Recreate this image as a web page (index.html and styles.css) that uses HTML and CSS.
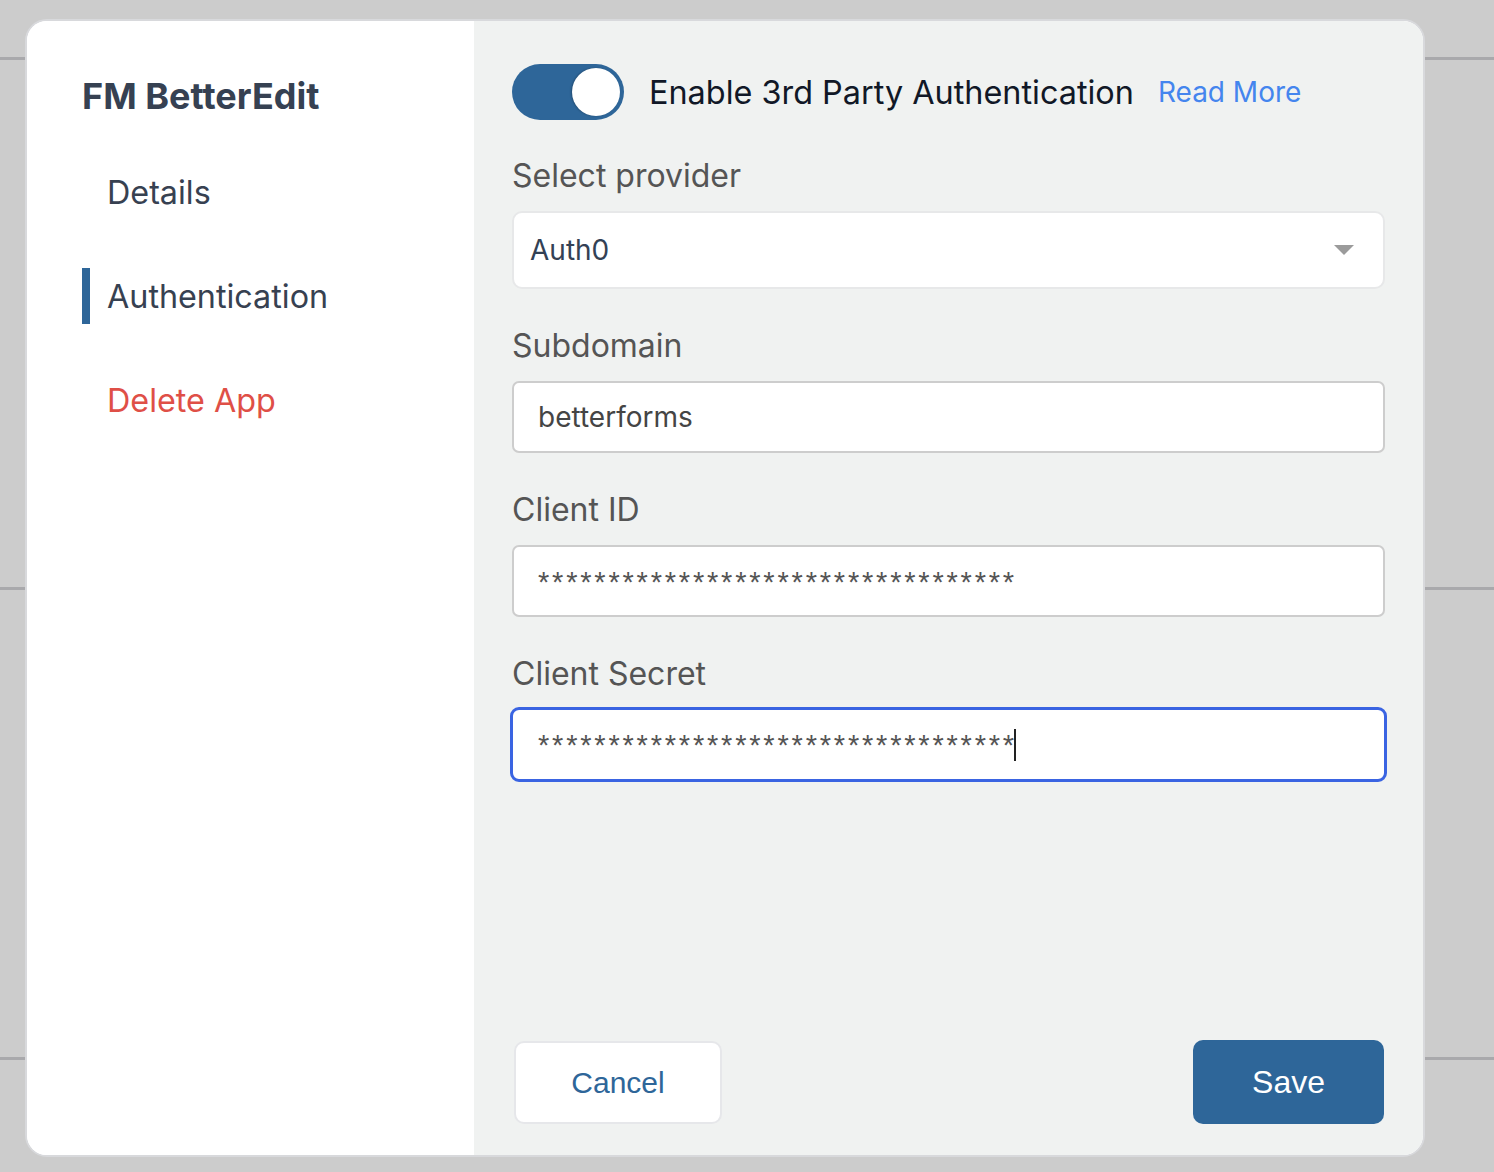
FILE: index.html
```html
<!DOCTYPE html>
<html lang="en">
<head>
<meta charset="utf-8">
<title>FM BetterEdit – Authentication</title>
<link rel="stylesheet" href="styles.css">
</head>
<body>
<div class="modal">
  <aside class="sidebar">
    <h1 class="app-title">FM BetterEdit</h1>
    <nav class="nav">
      <a class="nav-item">Details</a>
      <a class="nav-item active">Authentication</a>
      <a class="nav-item danger">Delete App</a>
    </nav>
  </aside>
  <main class="panel">
    <div class="form">
      <div class="toggle-row">
        <span class="toggle"><span class="knob"></span></span>
        <span class="toggle-label">Enable 3rd Party Authentication</span>
        <a class="read-more">Read More</a>
      </div>
      <div class="field">
        <label class="field-label">Select provider</label>
        <div class="select">
          <span class="select-value">Auth0</span>
          <span class="select-arrow"></span>
        </div>
      </div>
      <div class="field">
        <label class="field-label">Subdomain</label>
        <div class="input"><span class="input-text">betterforms</span></div>
      </div>
      <div class="field">
        <label class="field-label">Client ID</label>
        <div class="input"><span class="input-text masked">**********************************</span></div>
      </div>
      <div class="field">
        <label class="field-label">Client Secret</label>
        <div class="input focused"><span class="input-text masked">**********************************</span><span class="caret"></span></div>
      </div>
    </div>
    <div class="actions">
      <button class="btn btn-cancel">Cancel</button>
      <button class="btn btn-save">Save</button>
    </div>
  </main>
</div>
</body>
</html>
```

FILE: styles.css
```css
* { box-sizing: border-box; }

html, body {
  margin: 0;
  padding: 0;
}

body {
  width: 1494px;
  height: 1172px;
  overflow: hidden;
  background-color: #cccccc;
  background-image:
    linear-gradient(#a9a9ac, #a9a9ac),
    linear-gradient(#a9a9ac, #a9a9ac),
    linear-gradient(#a9a9ac, #a9a9ac);
  background-size: 100% 3px, 100% 3px, 100% 3px;
  background-position: 0 57px, 0 587px, 0 1057px;
  background-repeat: no-repeat;
  font-family: "Inter", "Liberation Sans", sans-serif;
  padding-top: 19px;
  padding-left: 25px;
}

.modal {
  width: 1400px;
  height: 1138px;
  border: 2px solid #d8d9dc;
  border-radius: 22px;
  overflow: hidden;
  display: grid;
  grid-template-columns: 447px 1fr;
  background: #ffffff;
}

/* Sidebar */
.sidebar {
  background: #ffffff;
  padding: 55px 0 0 55px;
}

.app-title {
  margin: 0;
  font-size: 36px;
  line-height: 40px;
  font-weight: 700;
  color: #364152;
}

.nav {
  display: flex;
  flex-direction: column;
  gap: 48px;
  margin-top: 48px;
}

.nav-item {
  display: flex;
  align-items: center;
  height: 56px;
  padding-left: 25px;
  font-size: 32.3px;
  color: #374151;
}

.nav-item.active {
  border-left: 8px solid #2e6699;
  padding-left: 17px;
}

.nav-item.danger {
  color: #df4f47;
}

/* Right panel */
.panel {
  background: #f0f2f1;
  padding: 43px 38px 31px 38px;
  display: flex;
  flex-direction: column;
  justify-content: space-between;
}

.toggle-row {
  display: flex;
  align-items: center;
  height: 56px;
}

.toggle {
  width: 112px;
  height: 56px;
  border-radius: 28px;
  background: #2e6699;
  display: flex;
  justify-content: flex-end;
  align-items: center;
  padding: 4px;
}

.knob {
  width: 48px;
  height: 48px;
  border-radius: 50%;
  background: #ffffff;
  box-shadow: -1px 0 2px rgba(0, 0, 0, 0.25);
}

.toggle-label {
  margin-left: 25px;
  font-size: 32.4px;
  color: #111827;
}

.read-more {
  margin-left: 24px;
  font-size: 28px;
  color: #4485ee;
}

.field {
  display: flex;
  flex-direction: column;
  margin-top: 37px;
}

.toggle-row + .field {
  margin-top: 36px;
}

.field-label {
  font-size: 32px;
  line-height: 40px;
  color: #555555;
  margin-bottom: 15px;
}

.select {
  height: 78px;
  background: #ffffff;
  border: 2px solid #e7e8e9;
  border-radius: 10px;
  display: flex;
  align-items: center;
  justify-content: space-between;
  padding: 0 29px 0 16px;
}

.select-value {
  font-size: 28px;
  color: #334155;
}

.select-arrow {
  width: 0;
  height: 0;
  border-left: 10px solid transparent;
  border-right: 10px solid transparent;
  border-top: 10px solid #9b9b9b;
}

.input {
  height: 72px;
  background: #ffffff;
  border: 2px solid #cdcdcd;
  border-radius: 7px;
  display: flex;
  align-items: center;
  padding: 0 24px;
}

.input.focused {
  border: 3px solid #3a64e2;
  border-radius: 9px;
  margin: -2px -2px 0 -2px;
  height: 75px;
  padding: 0 25px;
}

.input-text {
  font-family: "Inter", "Liberation Sans", sans-serif;
  font-size: 28px;
  color: #454545;
}

.input-text.masked {
  font-family: "Liberation Sans", Arial, sans-serif;
  font-size: 29px;
  letter-spacing: 2.8px;
  color: #555555;
  margin-top: 2px;
}

.caret {
  display: inline-block;
  width: 2px;
  height: 32px;
  background: #222222;
  margin-left: -3px;
}

.actions {
  display: flex;
  justify-content: space-between;
  align-items: flex-end;
  padding: 0 1px 0 2px;
}

.btn {
  font-family: "Liberation Sans", Arial, sans-serif;
  border-radius: 10px;
  cursor: pointer;
}

.btn-cancel {
  width: 208px;
  height: 83px;
  background: #ffffff;
  border: 2px solid #e6e7ea;
  color: #2e6699;
  font-size: 30px;
}

.btn-save {
  width: 191px;
  height: 84px;
  background: #2e6699;
  border: none;
  color: #ffffff;
  font-size: 32px;
}
```
